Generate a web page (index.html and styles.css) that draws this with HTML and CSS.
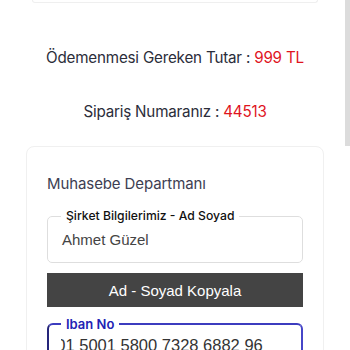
FILE: index.html
```html
<!DOCTYPE html>
<html lang="tr">
<head>
<meta charset="utf-8">
<link rel="stylesheet" href="styles.css">
</head>
<body>
<div class="page">
  <div class="prev-card"></div>
  <p class="info first">Ödemenmesi Gereken Tutar : <span class="red">999 TL</span></p>
  <p class="info second">Sipariş Numaranız : <span class="red">44513</span></p>
  <div class="card">
    <h2 class="dept">Muhasebe Departmanı</h2>
    <fieldset class="field">
      <legend class="label">Şirket Bilgilerimiz - Ad Soyad</legend>
      <div class="value">Ahmet Güzel</div>
    </fieldset>
    <button class="copy">Ad - Soyad Kopyala</button>
    <fieldset class="field focus">
      <legend class="label blue">Iban No</legend>
      <div class="value iban"><span class="iban-text">TR33 0001 5001 5800 7328 6882 96</span></div>
    </fieldset>
  </div>
</div>
<div class="scroll-thumb"></div>
</body>
</html>
```
FILE: styles.css
```css
html, body {
  margin: 0;
  padding: 0;
  background: #fff;
  overflow: hidden;
}
body {
  font-family: Inter, "Noto Sans", sans-serif;
  color: #2b2d3a;
}
.page {
  width: 350px;
  height: 350px;
  overflow: hidden;
}
.prev-card {
  width: 284px;
  height: 2px;
  margin: 0 auto;
  border: 1px solid #efefef;
  border-top: none;
  border-radius: 0 0 6px 6px;
}
.info {
  margin: 0;
  text-align: center;
  font-size: 15.2px;
  font-weight: 400;
  line-height: 20px;
  letter-spacing: -0.2px;
}
.first {
  margin-top: 45px;
}
.second {
  margin-top: 34px;
}
.red {
  color: #e0141e;
}
.card {
  width: 256px;
  margin: 24px auto 0;
  padding: 26px 20px 20px;
  border: 1px solid #f0f0f0;
  border-radius: 8px;
}
.dept {
  margin: 0;
  font-size: 15px;
  font-weight: 400;
  line-height: 22px;
  color: #3d3e52;
  letter-spacing: -0.1px;
}
.field {
  margin: 12px 0 0;
  padding: 0 14px 12px 14px;
  border: 1px solid #dedede;
  border-radius: 5px;
  min-width: 0;
}
.label {
  padding: 0 5px;
  margin-left: -1px;
  font-size: 12.2px;
  font-weight: 500;
  line-height: 18px;
  color: #111;
}
.value {
  font-family: "Liberation Sans", Arial, sans-serif;
  font-size: 15px;
  line-height: 20px;
  color: #444;
  margin-left: 0;
  margin-top: 5px;
}
.copy {
  display: block;
  width: 256px;
  height: 34px;
  margin-top: 10px;
  padding: 0;
  border: none;
  background: #444;
  color: #fff;
  font-family: "Liberation Sans", Arial, sans-serif;
  font-size: 15px;
}
.focus {
  margin-top: 8px;
  padding-left: 12px;
  border: 2px solid #4646c8;
  border-left-color: #25257a;
  border-top-color: #3c3cbf;
  border-radius: 6px;
}
.blue {
  color: #2222b4;
  font-size: 13px;
  font-weight: 600;
  margin-left: 0;
}
.iban {
  font-size: 16.5px;
  color: #333;
  overflow: hidden;
  white-space: nowrap;
  margin-top: 2px;
}
.iban-text {
  display: inline-block;
  margin-left: -68px;
}
.scroll-thumb {
  position: fixed;
  top: 0;
  right: 0;
  width: 5px;
  height: 146px;
  background: #dcdcdc;
}
```
